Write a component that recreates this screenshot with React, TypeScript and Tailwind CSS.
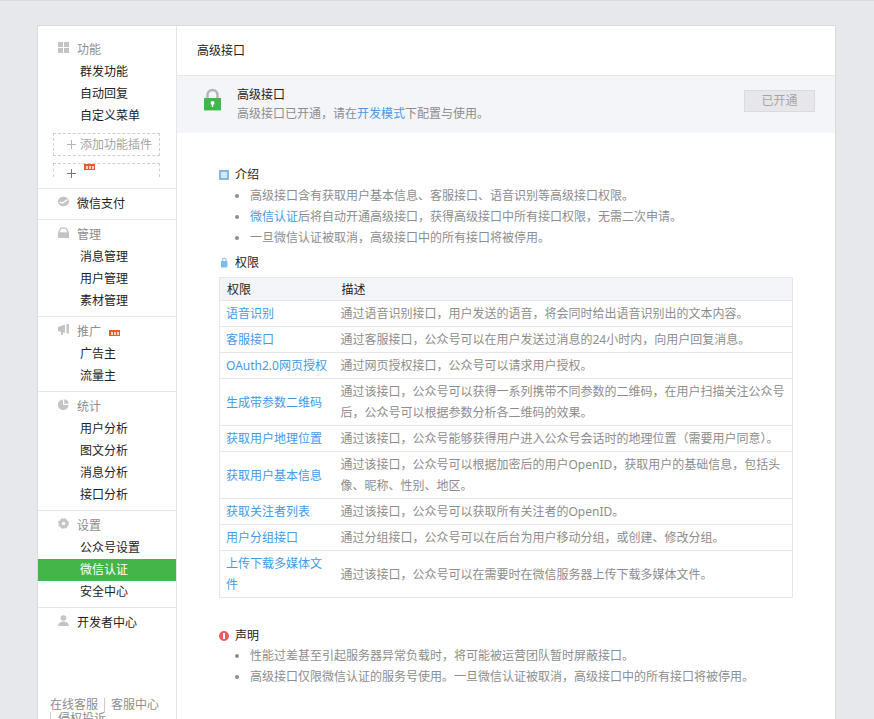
import type { ReactNode } from 'react';

const GridIcon = () => (
  <svg width="12" height="12" viewBox="0 0 12 12" fill="#c4c4c4">
    <rect x="0" y="0" width="5" height="5" />
    <rect x="6" y="0" width="5" height="5" />
    <rect x="0" y="6" width="5" height="5" />
    <rect x="6" y="6" width="5" height="5" />
  </svg>
);
const PayIcon = () => (
  <svg width="12" height="12" viewBox="0 0 12 12">
    <ellipse cx="5.500" cy="5.500" rx="5.500" ry="4.800" fill="#c4c4c4" />
    <path d="M1.500 6 L4.500 7 L9.500 3.500" stroke="#fff" strokeWidth="1.300" fill="none" />
  </svg>
);
const TrayIcon = () => (
  <svg width="12" height="12" viewBox="0 0 12 12">
    <path d="M2.500 0.500 H8.500 L11 5.500 V11 H0 V5.500 Z" fill="#c4c4c4" />
    <path d="M3.200 1.700 H7.800 L9.300 5.300 H1.700 Z" fill="#fff" />
  </svg>
);
const HornIcon = () => (
  <svg width="12" height="12" viewBox="0 0 12 12" fill="#c4c4c4">
    <path d="M0 3 L7 0.500 V9 L5 8.500 V11 H3 V8 L0 7 Z" />
    <rect x="8.500" y="0" width="2.500" height="9.500" />
  </svg>
);
const PieIcon = () => (
  <svg width="12" height="12" viewBox="0 0 12 12" fill="#c4c4c4">
    <path d="M5 0.500 V6 H10.500 A5.300 5.300 0 1 1 5 0.500 Z" />
    <path d="M6.200 0.300 A5 5 0 0 1 10.700 4.800 H6.200 Z" />
  </svg>
);
const GearIcon = () => (
  <svg width="12" height="12" viewBox="0 0 12 12">
    <circle cx="5.500" cy="5.500" r="3.300" fill="none" stroke="#c4c4c4" strokeWidth="3" />
    <circle cx="5.500" cy="5.500" r="5" fill="none" stroke="#c4c4c4" strokeWidth="1" strokeDasharray="2 2" />
  </svg>
);
const UserIcon = () => (
  <svg width="12" height="12" viewBox="0 0 12 12" fill="#c4c4c4">
    <circle cx="5.500" cy="3" r="2.800" />
    <path d="M0 11 C0.500 7.500 3.500 6.500 5.500 6.500 C7.500 6.500 10.500 7.500 11 11 Z" />
  </svg>
);
const PlusIcon = ({ color }: { color: string }) => (
  <svg width="9" height="9" viewBox="0 0 9 9" stroke={color} strokeWidth="1">
    <path d="M4.500 0 V9 M0 4.500 H9" />
  </svg>
);
const NewBadge = () => (
  <span className="flex items-center justify-center gap-px w-[11px] h-[6px] bg-[#f4572a]">
    <span className="w-[2px] h-[3px] bg-[#fbd3c5]" />
    <span className="w-[2px] h-[3px] bg-[#fbd3c5]" />
    <span className="w-[2px] h-[3px] bg-[#fbd3c5]" />
  </span>
);

const Head = ({ icon, title, badge, dark }: { icon: ReactNode; title: string; badge?: boolean; dark?: boolean }) => (
  <div className="flex items-center h-[22px] pl-5">
    <span className="w-3 h-3 flex mr-[7px] -mt-[4px]">{icon}</span>
    <span className={dark ? 'text-[#222]' : 'text-[#8d8d8d]'}>{title}</span>
    {badge && <span className="ml-2 mt-[2px]"><NewBadge /></span>}
  </div>
);

const Item = ({ text }: { text: string }) => (
  <div className={`h-[22px] leading-[22px] pl-[42px] ${text === '微信认证' ? 'bg-[#44b549] text-white' : 'text-[#222]'}`}>{text}</div>
);

const Group = ({ icon, title, items, badge, dark }: { icon: ReactNode; title: string; items?: string[]; badge?: boolean; dark?: boolean }) => (
  <div className="py-1 border-b border-[#e7e7eb]">
    <Head icon={icon} title={title} badge={badge} dark={dark} />
    {items?.map((i) => <Item key={i} text={i} />)}
  </div>
);

const Link = ({ children }: { children: ReactNode }) => <span className="text-[#459ae9]">{children}</span>;

const rows: { name: string; desc: string }[] = [
  { name: '语音识别', desc: '通过语音识别接口\uFF0C用户发送的语音\uFF0C将会同时给出语音识别出的文本内容。' },
  { name: '客服接口', desc: '通过客服接口\uFF0C公众号可以在用户发送过消息的24小时内\uFF0C向用户回复消息。' },
  { name: 'OAuth2.0网页授权', desc: '通过网页授权接口\uFF0C公众号可以请求用户授权。' },
  { name: '生成带参数二维码', desc: '通过该接口\uFF0C公众号可以获得一系列携带不同参数的二维码\uFF0C在用户扫描关注公众号后\uFF0C公众号可以根据参数分析各二维码的效果。' },
  { name: '获取用户地理位置', desc: '通过该接口\uFF0C公众号能够获得用户进入公众号会话时的地理位置\uFF08需要用户同意\uFF09。' },
  { name: '获取用户基本信息', desc: '通过该接口\uFF0C公众号可以根据加密后的用户OpenID\uFF0C获取用户的基础信息\uFF0C包括头像、昵称、性别、地区。' },
  { name: '获取关注者列表', desc: '通过该接口\uFF0C公众号可以获取所有关注者的OpenID。' },
  { name: '用户分组接口', desc: '通过分组接口\uFF0C公众号可以在后台为用户移动分组\uFF0C或创建、修改分组。' },
  { name: '上传下载多媒体文件', desc: '通过该接口\uFF0C公众号可以在需要时在微信服务器上传下载多媒体文件。' },
];

const Bullet = ({ children }: { children: ReactNode }) => (
  <li className="flex items-center h-[21px] text-[#8d8d8d]">
    <span className="w-1 h-1 rounded-full bg-[#8d8d8d] mr-[11px]" />
    <span>{children}</span>
  </li>
);

export default function App() {
  return (
    <div className="h-[719px] overflow-hidden bg-[#e7e8eb] border-t border-[#d9dadc] pt-6 pl-[37px] text-[12px] font-['Noto_Sans','Noto_Sans_CJK_SC',sans-serif]">
      <div className="w-[799px] h-[720px] bg-white border border-[#d9dadc] flex">
        <aside className="w-[139px] shrink-0 border-r border-[#e7e7eb] flex flex-col">
          <div className="pt-[13px] pb-[11px] border-b border-[#e7e7eb]">
            <Head icon={<GridIcon />} title="功能" />
            {['群发功能', '自动回复', '自定义菜单'].map((i) => <Item key={i} text={i} />)}
            <div className="ml-[15px] mr-4 mt-[6px] h-[23px] border border-dashed border-[#d0d0d0] flex items-center pl-[13px] text-[#a5a5a5]">
              <span className="mr-[4px]"><PlusIcon color="#b5b5b5" /></span>添加功能插件
            </div>
            <div className="ml-[15px] mr-4 mt-[7px] h-[14px] border-t border-x border-dashed border-[#d0d0d0] relative">
              <span className="absolute left-[13px] top-[5px] flex"><PlusIcon color="#777" /></span>
              <span className="absolute left-[30px] top-0"><NewBadge /></span>
            </div>
          </div>
          <Group icon={<PayIcon />} title="微信支付" dark />
          <Group icon={<TrayIcon />} title="管理" items={['消息管理', '用户管理', '素材管理']} />
          <Group icon={<HornIcon />} title="推广" badge items={['广告主', '流量主']} />
          <Group icon={<PieIcon />} title="统计" items={['用户分析', '图文分析', '消息分析', '接口分析']} />
          <Group icon={<GearIcon />} title="设置" items={['公众号设置', '微信认证', '安全中心']} />
          <div className="pt-1">
            <Head icon={<UserIcon />} title="开发者中心" dark />
          </div>
          <div className="mt-16 pl-3 flex flex-wrap leading-[14px] text-[#8d8d8d]">
            <span className="mr-[6px]">在线客服</span>
            <span className="border-l border-[#ccc] pl-[6px]">客服中心</span>
            <span className="border-l border-[#ccc] pl-[7px]">侵权投诉</span>
          </div>
        </aside>
        <main className="flex-1 min-w-0">
          <div className="h-[50px] flex items-center pl-5 text-[#222] border-b border-[#e7e7eb]">高级接口</div>
          <div className="h-[57px] bg-[#f4f5f9] flex items-start pl-[27px] pr-5">
            <svg width="17" height="23" viewBox="0 0 17 23" className="mt-3 mr-4 shrink-0">
              <path d="M3.500 11 V7 A5 5 0 0 1 13.500 7 V11" fill="none" stroke="#b5b5b5" strokeWidth="2.400" />
              <rect x="0" y="10" width="17" height="13" fill="#44b549" />
              <rect x="0" y="22" width="17" height="1" fill="#a9dcab" />
              <circle cx="8.500" cy="15" r="2" fill="#fff" />
              <rect x="7.800" y="15" width="1.400" height="4" fill="#fff" />
            </svg>
            <div className="flex-1 leading-[19px] mt-[9px]">
              <div className="text-[#222]">高级接口</div>
              <div className="text-[#8d8d8d]">高级接口已开通{'\uFF0C'}请在<Link>开发模式</Link>下配置与使用。</div>
            </div>
            <div className="w-[71px] h-[22px] mt-[14px] bg-[#e7e7eb] border border-[#dadbde] text-[#a5a5a5] flex items-center justify-center">已开通</div>
          </div>
          <div className="pl-[42px] pt-[33px]">
            <div className="flex items-center h-[18px] text-[#222]">
              <span className="w-[10px] h-[10px] bg-[#d6e8f8] border-2 border-[#7dbbe9] mr-[6px]" />介绍
            </div>
            <ul className="pl-4 mt-px mb-[5px]">
              <Bullet>高级接口含有获取用户基本信息、客服接口、语音识别等高级接口权限。</Bullet>
              <Bullet><Link>微信认证</Link>后将自动开通高级接口{'\uFF0C'}获得高级接口中所有接口权限{'\uFF0C'}无需二次申请。</Bullet>
              <Bullet>一旦微信认证被取消{'\uFF0C'}高级接口中的所有接口将被停用。</Bullet>
            </ul>
            <div className="flex items-center h-[18px] text-[#222]">
              <svg width="10" height="11" viewBox="0 0 10 11" className="mr-[6px]">
                <path d="M3.500 5 V3 A1.800 1.800 0 0 1 7.100 3 V5" fill="none" stroke="#9cc6ea" strokeWidth="1.200" />
                <rect x="2" y="4" width="6.500" height="6.500" rx="1" fill="#7dbbe9" />
              </svg>
              <span className="pt-px">权限</span>
            </div>
            <table className="w-[574px] mt-[6px] border-collapse border border-[#e7e7eb] table-fixed">
              <thead>
                <tr className="h-[23px] bg-[#f4f5f9] text-[#222] text-left">
                  <th className="font-normal w-[114px] pl-[7px] pt-px border-b border-[#e7e7eb]">权限</th>
                  <th className="font-normal pl-2 pt-px border-b border-[#e7e7eb]">描述</th>
                </tr>
              </thead>
              <tbody>
                {rows.map((r) => (
                  <tr key={r.name} className="border-b border-[#e7e7eb]">
                    <td className="pl-[6px] pr-[2px] py-[2px] leading-[21px] text-[#459ae9]">{r.name}</td>
                    <td className="pl-[7px] pr-1 py-[2px] leading-[21px] text-[#8d8d8d]">{r.desc}</td>
                  </tr>
                ))}
              </tbody>
            </table>
            <div className="flex items-center h-[18px] mt-[29px] text-[#222]">
              <span className="w-[10px] h-[10px] rounded-full bg-[#f0595f] mr-[6px] flex items-center justify-center">
                <span className="w-[2px] h-[6px] bg-white" />
              </span>
              声明
            </div>
            <ul className="pl-4">
              <Bullet>性能过差甚至引起服务器异常负载时{'\uFF0C'}将可能被运营团队暂时屏蔽接口。</Bullet>
              <Bullet>高级接口仅限微信认证的服务号使用。一旦微信认证被取消{'\uFF0C'}高级接口中的所有接口将被停用。</Bullet>
            </ul>
          </div>
        </main>
      </div>
    </div>
  );
}
